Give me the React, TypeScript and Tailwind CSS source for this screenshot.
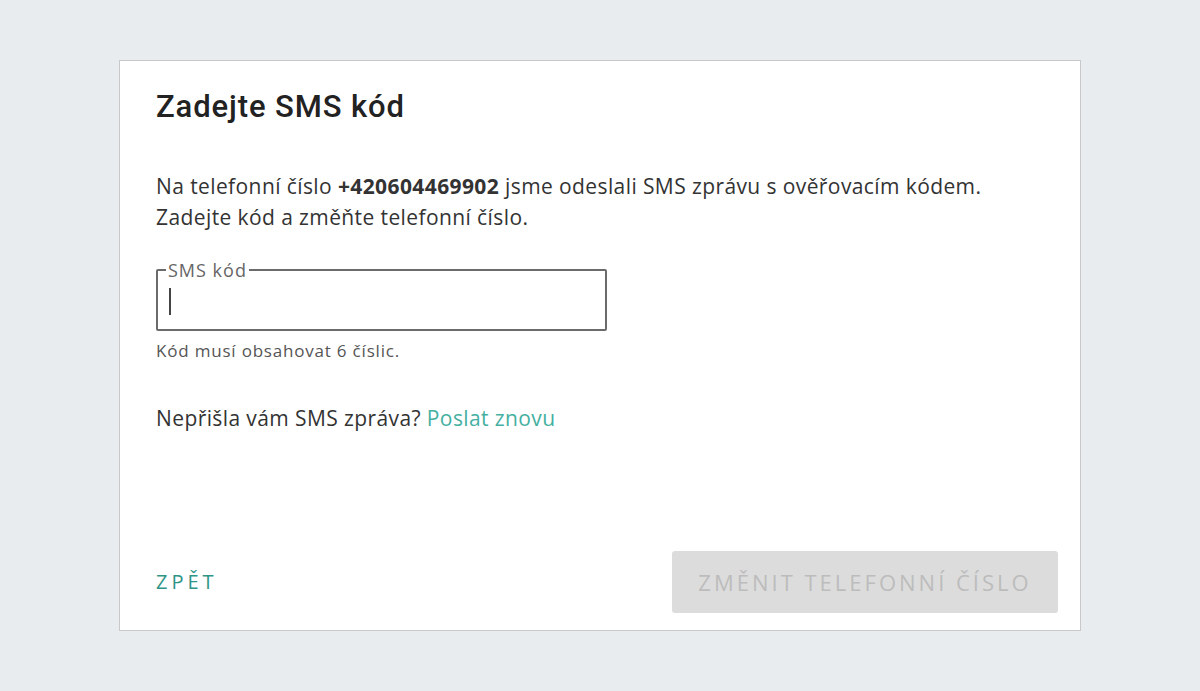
import React from "react";

export default function App() {
  return (
    <div className="min-h-[691px] w-full bg-[#e9ecef] flex justify-center pt-[60px]" style={{ fontFamily: '"Open Sans", sans-serif' }}>
      <div className="w-[962px] h-[571px] bg-white border border-[#c9c9c9] flex flex-col px-[36px] pt-[26px] pb-[17px] box-border">
        <h1 className="text-[31px] leading-[40px] font-medium tracking-[0.9px] text-[#222]" style={{ fontFamily: "Roboto, sans-serif" }}>
          Zadejte SMS kód
        </h1>
        <p className="mt-[44px] text-[21px] leading-[31px] tracking-[0.4px] text-[#333]">
          Na telefonní číslo <b className="font-bold">+420604469902</b> jsme odeslali SMS zprávu s ověřovacím kódem.
          <br />
          Zadejte kód a změňte telefonní číslo.
        </p>
        <fieldset className="mt-[28px] w-[451px] h-[70px] border-2 border-[#6b6b6b] rounded-[2px] px-[8px] pt-0 m-0">
          <legend className="px-[2px] text-[18px] leading-[18px] tracking-[1px] text-[#666]">SMS kód</legend>
          <div className="w-[2px] h-[27px] bg-[#444] mt-[9px] ml-[3px]" />
        </fieldset>
        <p className="mt-[10px] text-[17px] leading-[20px] tracking-[0.8px] text-[#555]">Kód musí obsahovat 6 číslic.</p>
        <p className="mt-[44px] text-[21px] leading-[26px] tracking-[0.4px] text-[#333]">
          Nepřišla vám SMS zpráva? <span className="text-[#45b0a1]">Poslat znovu</span>
        </p>
        <div className="mt-auto flex items-center justify-between">
          <span className="text-[20px] tracking-[4px] text-[#2f9586]">ZPĚT</span>
          <button className="w-[386px] h-[62px] bg-[#dcdcdc] rounded-[3px] text-[22px] tracking-[3px] text-[#bcbcbc] -mr-[14px]">
            ZMĚNIT TELEFONNÍ ČÍSLO
          </button>
        </div>
      </div>
    </div>
  );
}
